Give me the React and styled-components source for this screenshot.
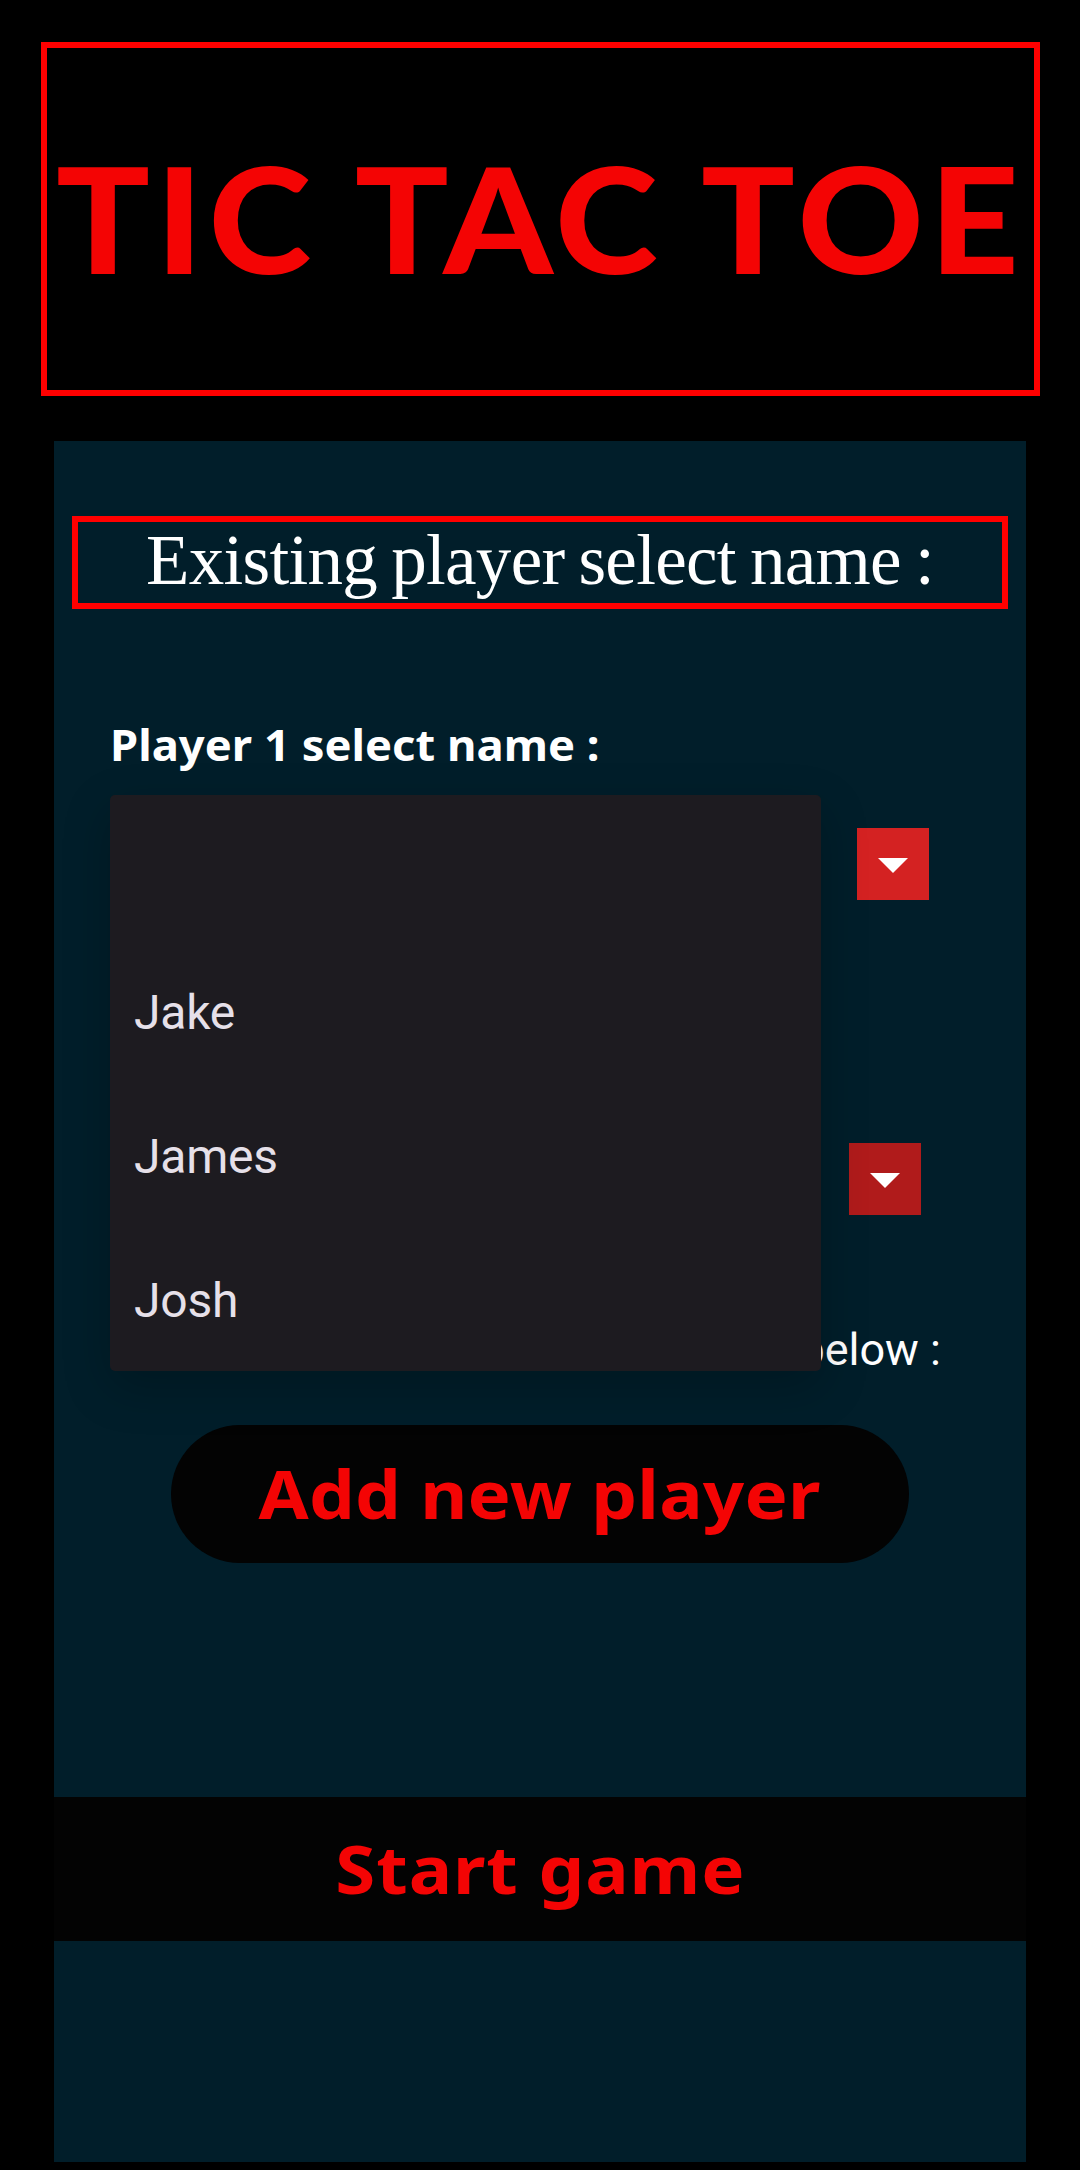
import React from "react";
import styled, { createGlobalStyle } from "styled-components";

const GlobalStyle = createGlobalStyle`
  * { box-sizing: border-box; }
  body { margin: 0; background: #000; }
  button { border: 0; margin: 0; cursor: pointer; }
`;

const display = `"Noto Sans", "Open Sans", sans-serif`;

const Screen = styled.main`
  display: flex;
  flex-direction: column;
  width: 1080px;
  height: 2170px;
  padding: 42px 40px 8px 41px;
  background: #000;
  overflow: hidden;
`;

const Banner = styled.header`
  display: flex;
  align-items: center;
  height: 354px;
  padding: 0 0 3px 9px;
  border: 6px solid #ff0000;
`;

const Title = styled.h1`
  margin: 0;
  font: 900 147px/1 Lato, sans-serif;
  letter-spacing: 5.3px;
  white-space: nowrap;
  transform: scaleX(1.06);
  transform-origin: left center;
  color: #f40404;
`;

const Panel = styled.section`
  display: flex;
  flex-direction: column;
  flex: 1;
  margin: 45px 14px 0 13px;
  padding-top: 75px;
  background: #011e2a;
`;

const Heading = styled.h2`
  display: flex;
  justify-content: center;
  align-items: center;
  height: 93px;
  margin: 0 18px;
  padding-bottom: 4px;
  border: 6px solid #ff0000;
  font: 400 71px/1 "Liberation Serif", serif;
  letter-spacing: -0.7px;
  word-spacing: -3px;
  white-space: nowrap;
  color: #fff;
`;

const Players = styled.div`
  display: flex;
  flex-direction: column;
  height: 816px;
  padding: 106px 56px 0;
`;

const Label = styled.label`
  height: 60px;
  font: 700 43px/60px ${display};
  letter-spacing: 0;
  white-space: nowrap;
  transform: scaleX(1.055);
  transform-origin: left center;
  color: #fff;
`;

const Field = styled.div`
  display: flex;
  position: relative;
  align-items: center;
  justify-content: flex-end;
  height: 138px;
  margin-top: ${(p) => p.$gap}px;
  padding-right: ${(p) => p.$inset}px;
`;

const Toggle = styled.button`
  display: flex;
  align-items: center;
  justify-content: center;
  width: 72px;
  height: 72px;
  padding: 3px 0 0;
  background: ${(p) => p.$color};
`;

const Menu = styled.ul`
  position: absolute;
  z-index: 1;
  top: 0;
  left: 0;
  width: 711px;
  margin: 0;
  padding: 0;
  list-style: none;
  border-radius: 5px;
  background: #1d1b20;
  box-shadow: 0 16px 48px rgba(0, 0, 0, 0.22);
`;

const Option = styled.li`
  height: 144px;
  padding: 1px 24px 0;
  font: 400 48px/146px Roboto, sans-serif;
  letter-spacing: -0.2px;
  color: #e6e0e9;
`;

const Hint = styled.p`
  margin: 72px 29px 0 0;
  font: 400 45px/60px Roboto, sans-serif;
  text-align: right;
  color: #fff;
`;

const ActionButton = styled.button`
  padding: 0 0 2px;
  background: #030303;
  font: 700 66px/1 ${display};
  color: #f40404;
`;

const AddButton = styled(ActionButton)`
  align-self: center;
  width: 738px;
  height: 138px;
  border-radius: 69px;
`;

const StartButton = styled(ActionButton)`
  height: 144px;
  margin-top: 234px;
`;

const ActionText = styled.span`
  display: inline-block;
  transform: scaleX(1.1);
  letter-spacing: ${(p) => p.$spacing}px;
`;

const Caret = () => (
  <svg width="30" height="15" viewBox="0 0 30 15" aria-hidden="true">
    <path d="M0 0H30L15 15Z" fill="#fff" />
  </svg>
);

const names = ["", "Jake", "James", "Josh"];

export default function App() {
  return (
    <Screen>
      <GlobalStyle />
      <Banner>
        <Title>TIC TAC TOE</Title>
      </Banner>
      <Panel>
        <Heading>Existing player select name :</Heading>
        <Players>
          <Label>Player 1 select name :</Label>
          <Field $gap={20} $inset={41}>
            <Menu>
              {names.map((name) => (
                <Option key={name}>{name}</Option>
              ))}
            </Menu>
            <Toggle $color="#d42222" aria-label="Player 1">
              <Caret />
            </Toggle>
          </Field>
          <Field $gap={177} $inset={49}>
            <Toggle $color="#b01b1b" aria-label="Player 2">
              <Caret />
            </Toggle>
          </Field>
          <Hint>below :</Hint>
        </Players>
        <AddButton>
          <ActionText $spacing={0.2}>Add new player</ActionText>
        </AddButton>
        <StartButton>
          <ActionText $spacing={0.8}>Start game</ActionText>
        </StartButton>
      </Panel>
    </Screen>
  );
}
